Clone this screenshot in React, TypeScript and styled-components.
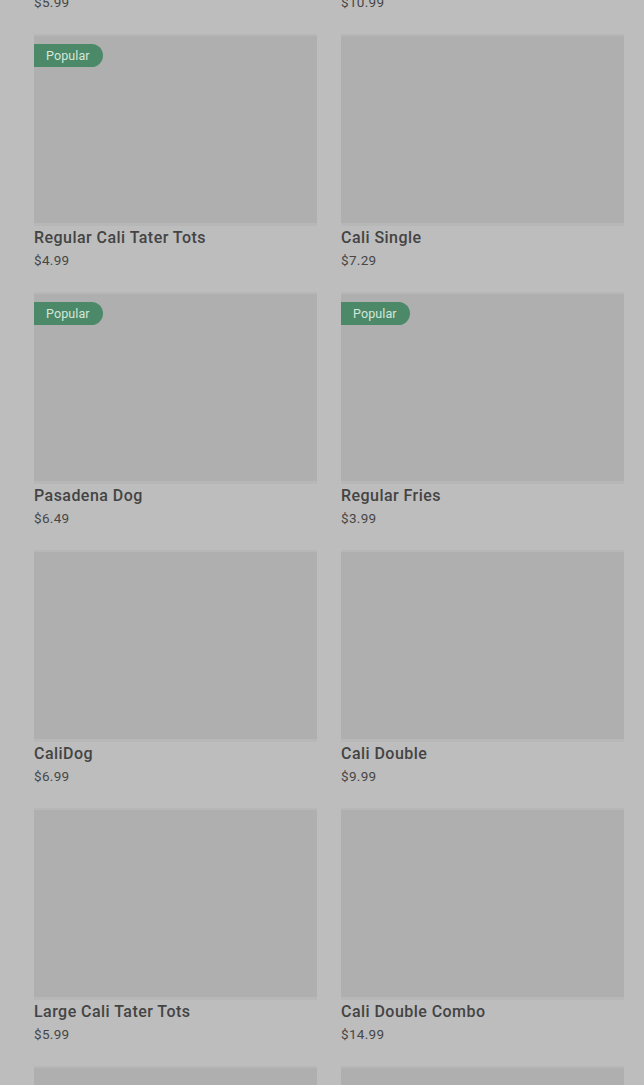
import * as React from "react";
import styled, { createGlobalStyle } from "styled-components";

const GlobalStyle = createGlobalStyle`
  html, body {
    margin: 0;
    padding: 0;
    background: #bdbdbd;
    overflow: hidden;
    height: 1085px;
  }
`;

const Page = styled.div`
  height: 1085px;
  overflow: hidden;
  background: #bdbdbd;
  font-family: Roboto, "Liberation Sans", sans-serif;
`;

const Grid = styled.div`
  display: grid;
  grid-template-columns: 283px 283px;
  column-gap: 24px;
  row-gap: 27px;
  padding: 0 20px 0 34px;
  margin-top: -222px;
`;

const Card = styled.div`
  display: flex;
  flex-direction: column;
  height: 231px;
  cursor: pointer;
`;

const Thumb = styled.div`
  position: relative;
  flex: 0 0 187px;
  background: #afafaf;
  box-shadow: 0 -2px 0 #b7b7b7, 0 3px 0 #b7b7b7;
`;

const Badge = styled.span`
  position: absolute;
  top: 8px;
  left: 0;
  height: 23px;
  padding: 0 13px 0 12px;
  display: flex;
  align-items: center;
  border-radius: 0 12px 12px 0;
  background: #4b8968;
  color: #d6e6da;
  font-size: 12.5px;
  letter-spacing: 0.1px;
`;

const Title = styled.div`
  margin-top: 5px;
  height: 20px;
  line-height: 20px;
  font-size: 16px;
  font-weight: 500;
  letter-spacing: 0.45px;
  color: #444444;
`;

const Price = styled.div`
  margin-top: 4px;
  line-height: 16px;
  font-size: 13.5px;
  color: #474747;
  letter-spacing: 0.3px;
`;

type Item = { name: string; price: string; popular?: boolean };

const items: Item[] = [
  { name: "Cali Tater Tots", price: "$5.99" },
  { name: "Cali Combo", price: "$10.99" },
  { name: "Regular Cali Tater Tots", price: "$4.99", popular: true },
  { name: "Cali Single", price: "$7.29" },
  { name: "Pasadena Dog", price: "$6.49", popular: true },
  { name: "Regular Fries", price: "$3.99", popular: true },
  { name: "CaliDog", price: "$6.99" },
  { name: "Cali Double", price: "$9.99" },
  { name: "Large Cali Tater Tots", price: "$5.99" },
  { name: "Cali Double Combo", price: "$14.99" },
  { name: "Large Fries", price: "$4.99" },
  { name: "Cali Single Combo", price: "$11.99" },
];

const MenuCard: React.FC<{ item: Item }> = ({ item }) => (
  <Card>
    <Thumb>{item.popular && <Badge>Popular</Badge>}</Thumb>
    <Title>{item.name}</Title>
    <Price>{item.price}</Price>
  </Card>
);

const App: React.FC = () => (
  <Page>
    <GlobalStyle />
    <Grid>
      {items.map((it, i) => (
        <MenuCard key={i} item={it} />
      ))}
    </Grid>
  </Page>
);

export default App;
